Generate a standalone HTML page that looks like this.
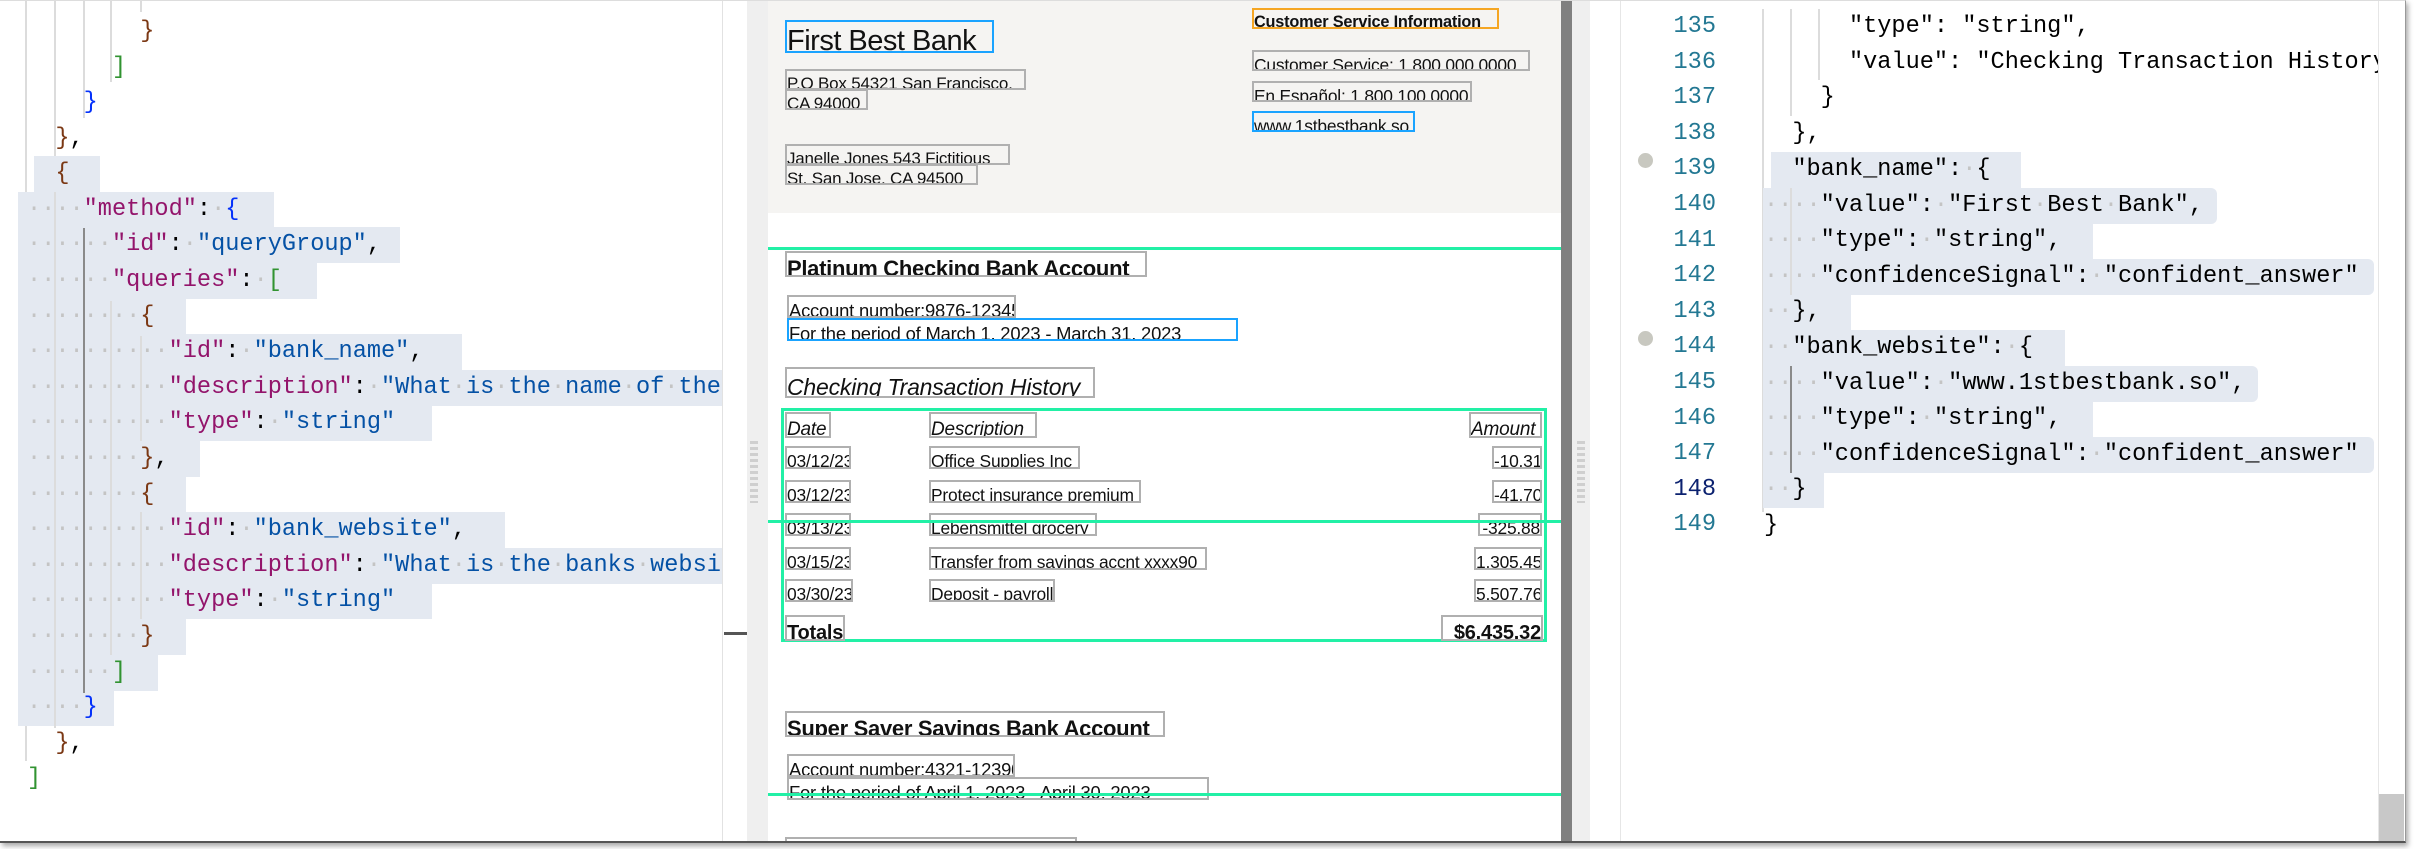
<!DOCTYPE html>
<html><head><meta charset="utf-8">
<style>
*{margin:0;padding:0;box-sizing:border-box}
body{width:2424px;height:849px;background:#fff;position:relative;overflow:hidden;font-family:"Liberation Sans",sans-serif}
.win{position:absolute;left:0;top:0;width:2406px;height:843px;border-right:1px solid #999;border-bottom:2px solid #555;border-top:1px solid #ddd;box-shadow:2px 3px 5px rgba(0,0,0,.35);overflow:hidden;background:#fff}
.code{position:absolute;font-family:"Liberation Mono",monospace;font-size:23.6px;white-space:pre;line-height:35.6px;height:35.6px}
.hl{position:absolute;background:#e4e9f1;height:35.6px}
.g{position:absolute;width:2px;background:#dcdcdc}
.k{color:#93146b}.s{color:#0451a5}.br{color:#7b3814}.bb{color:#0431fa}.bg{color:#319331}.d{color:#c4c4c4}
.t{position:absolute;white-space:nowrap;overflow:hidden;border:2px solid #b0b0b0;color:#111;font-size:17.4px;line-height:26px;letter-spacing:-0.2px}
.grn{position:absolute;background:#22f0a6}
.ln{position:absolute;left:1640px;width:76px;text-align:right;font-family:"Liberation Mono",monospace;font-size:23.6px;line-height:35.6px;color:#237893}
</style></head><body>
<div class="win">
<!-- LEFT PANEL -->
<div style="position:absolute;left:0;top:0;width:722px;height:843px;overflow:hidden">
<div class="g" style="left:25px;top:0;height:760px"></div>
<div class="g" style="left:54px;top:0;height:725px"></div>
<div class="g" style="left:83px;top:0;height:117px"></div>
<div class="g" style="left:110px;top:0;height:81px"></div>
<div class="g" style="left:140px;top:0;height:11px"></div>
<div class="hl" style="left:34px;top:155px;width:66px"></div>
<div class="hl" style="left:18px;top:191px;width:256px"></div>
<div class="hl" style="left:18px;top:226px;width:382px"></div>
<div class="hl" style="left:18px;top:262px;width:299px"></div>
<div class="hl" style="left:18px;top:298px;width:168px"></div>
<div class="hl" style="left:18px;top:333px;width:444px"></div>
<div class="hl" style="left:18px;top:369px;width:710px"></div>
<div class="hl" style="left:18px;top:404px;width:414px"></div>
<div class="hl" style="left:18px;top:440px;width:182px"></div>
<div class="hl" style="left:18px;top:476px;width:168px"></div>
<div class="hl" style="left:18px;top:511px;width:487px"></div>
<div class="hl" style="left:18px;top:547px;width:710px"></div>
<div class="hl" style="left:18px;top:582px;width:414px"></div>
<div class="hl" style="left:18px;top:618px;width:168px"></div>
<div class="hl" style="left:18px;top:654px;width:140px"></div>
<div class="hl" style="left:18px;top:689px;width:96px"></div>
<div class="g" style="left:54px;top:191px;height:536px"></div>
<div class="g" style="left:83px;top:227px;height:465px;background:#8a8a8a"></div>
<div class="g" style="left:110px;top:300px;height:354px"></div>
<div class="g" style="left:140px;top:335px;height:105px"></div>
<div class="g" style="left:140px;top:511px;height:107px"></div>
<div class="code" style="left:27px;top:13px">        <span class="br">}</span></div>
<div class="code" style="left:27px;top:49px">      <span class="bg">]</span></div>
<div class="code" style="left:27px;top:84px">    <span class="bb">}</span></div>
<div class="code" style="left:27px;top:120px">  <span class="br">}</span>,</div>
<div class="code" style="left:27px;top:155px">  <span class="br">{</span></div>
<div class="code" style="left:27px;top:191px"><span class="d">····</span><span class="k">"method"</span>:<span class="d">·</span><span class="bb">{</span></div>
<div class="code" style="left:27px;top:226px"><span class="d">······</span><span class="k">"id"</span>:<span class="d">·</span><span class="s">"queryGroup"</span>,</div>
<div class="code" style="left:27px;top:262px"><span class="d">······</span><span class="k">"queries"</span>:<span class="d">·</span><span class="bg">[</span></div>
<div class="code" style="left:27px;top:298px"><span class="d">········</span><span class="br">{</span></div>
<div class="code" style="left:27px;top:333px"><span class="d">··········</span><span class="k">"id"</span>:<span class="d">·</span><span class="s">"bank_name"</span>,</div>
<div class="code" style="left:27px;top:369px"><span class="d">··········</span><span class="k">"description"</span>:<span class="d">·</span><span class="s">"What<span class="d">·</span>is<span class="d">·</span>the<span class="d">·</span>name<span class="d">·</span>of<span class="d">·</span>the<span class="d">·</span>bank?"</span>,</div>
<div class="code" style="left:27px;top:404px"><span class="d">··········</span><span class="k">"type"</span>:<span class="d">·</span><span class="s">"string"</span></div>
<div class="code" style="left:27px;top:440px"><span class="d">········</span><span class="br">}</span>,</div>
<div class="code" style="left:27px;top:476px"><span class="d">········</span><span class="br">{</span></div>
<div class="code" style="left:27px;top:511px"><span class="d">··········</span><span class="k">"id"</span>:<span class="d">·</span><span class="s">"bank_website"</span>,</div>
<div class="code" style="left:27px;top:547px"><span class="d">··········</span><span class="k">"description"</span>:<span class="d">·</span><span class="s">"What<span class="d">·</span>is<span class="d">·</span>the<span class="d">·</span>banks<span class="d">·</span>website?"</span>,</div>
<div class="code" style="left:27px;top:582px"><span class="d">··········</span><span class="k">"type"</span>:<span class="d">·</span><span class="s">"string"</span></div>
<div class="code" style="left:27px;top:618px"><span class="d">········</span><span class="br">}</span></div>
<div class="code" style="left:27px;top:654px"><span class="d">······</span><span class="bg">]</span></div>
<div class="code" style="left:27px;top:689px"><span class="d">····</span><span class="bb">}</span></div>
<div class="code" style="left:27px;top:725px">  <span class="br">}</span>,</div>
<div class="code" style="left:27px;top:760px"><span class="bg">]</span></div>
</div>
<div style="position:absolute;left:722px;top:0;width:1px;height:843px;background:#e2e2e2"></div>
<div style="position:absolute;left:724px;top:631px;width:24px;height:3px;background:#555"></div>
<div style="position:absolute;left:747px;top:0;width:21px;height:843px;background:#efefef"></div>
<div style="position:absolute;left:750px;top:440px;width:8px;height:62px;background:repeating-linear-gradient(#cfcfcf 0 3px,transparent 3px 6px)"></div>

<!-- DOC -->
<div style="position:absolute;left:768px;top:0;width:793px;height:843px;background:#fff;overflow:hidden">
<div style="position:absolute;left:0;top:0;width:793px;height:212px;background:#f5f4f2"></div>
</div>
<div class="t" style="left:785px;top:19px;width:209px;height:33px;border-color:#1aa3ff;font-size:29px;line-height:38px;letter-spacing:-0.5px">First Best Bank</div>
<div class="t" style="left:785px;top:68px;width:241px;height:21px;font-size:17px;line-height:26px">P.O Box 54321 San Francisco,</div>
<div class="t" style="left:785px;top:88px;width:83px;height:21px;font-size:17px;line-height:26px">CA 94000</div>
<div class="t" style="left:785px;top:143px;width:225px;height:21px;font-size:17px;line-height:26px">Janelle Jones 543 Fictitious</div>
<div class="t" style="left:785px;top:163px;width:193px;height:21px;font-size:17px;line-height:26px">St. San Jose, CA 94500</div>
<div class="t" style="left:1252px;top:7px;width:247px;height:21px;border-color:#f5a623;font-size:16.3px;font-weight:bold;line-height:25px">Customer Service Information</div>
<div class="t" style="left:1252px;top:49px;width:278px;height:21px;font-size:17.4px;line-height:26px">Customer Service: 1.800.000.0000</div>
<div class="t" style="left:1252px;top:80px;width:220px;height:21px;font-size:17.4px;line-height:26px">En Español: 1.800.100.0000</div>
<div class="t" style="left:1252px;top:110px;width:163px;height:21px;border-color:#1aa3ff;font-size:17.4px;line-height:26px">www.1stbestbank.so</div>
<div class="grn" style="left:768px;top:246px;width:793px;height:3px"></div>
<div class="t" style="left:785px;top:250px;width:362px;height:26px;font-size:22px;font-weight:bold;line-height:31px;letter-spacing:-0.3px">Platinum Checking Bank Account</div>
<div class="t" style="left:787px;top:294px;width:229px;height:23px;font-size:18.4px;line-height:28px">Account number:9876-12345</div>
<div class="t" style="left:787px;top:317px;width:451px;height:23px;border-color:#1aa3ff;font-size:18.4px;line-height:28px">For the period of March 1, 2023 - March 31, 2023</div>
<div class="t" style="left:785px;top:366px;width:310px;height:31px;font-size:23px;font-style:italic;line-height:37px">Checking Transaction History</div>
<div style="position:absolute;left:781px;top:407px;width:766px;height:234px;border:3px solid #22f0a6"></div>
<div class="t" style="left:785px;top:411px;width:46px;height:26px;font-size:19px;font-style:italic;line-height:31px">Date</div>
<div class="t" style="left:929px;top:411px;width:108px;height:26px;font-size:19px;font-style:italic;line-height:31px">Description</div>
<div class="t" style="left:1469px;top:411px;width:73px;height:26px;font-size:19px;font-style:italic;line-height:31px">Amount</div>
<div class="t" style="left:785px;top:445px;width:66px;height:23px">03/12/23</div>
<div class="t" style="left:929px;top:445px;width:151px;height:23px">Office Supplies Inc</div>
<div class="t" style="left:1492px;top:445px;width:50px;height:23px;text-align:right">-10.31</div>
<div class="t" style="left:785px;top:479px;width:66px;height:23px">03/12/23</div>
<div class="t" style="left:929px;top:479px;width:212px;height:23px">Protect insurance premium</div>
<div class="t" style="left:1492px;top:479px;width:50px;height:23px;text-align:right">-41.70</div>
<div class="t" style="left:785px;top:512px;width:66px;height:23px">03/13/23</div>
<div class="t" style="left:929px;top:512px;width:168px;height:23px">Lebensmittel grocery</div>
<div class="t" style="left:1478px;top:512px;width:64px;height:23px;text-align:right">-325.88</div>
<div class="t" style="left:785px;top:546px;width:66px;height:23px">03/15/23</div>
<div class="t" style="left:929px;top:546px;width:278px;height:23px">Transfer from savings accnt xxxx90</div>
<div class="t" style="left:1474px;top:546px;width:68px;height:23px;text-align:right">1,305.45</div>
<div class="t" style="left:785px;top:578px;width:68px;height:23px">03/30/23</div>
<div class="t" style="left:929px;top:578px;width:126px;height:23px">Deposit - payroll</div>
<div class="t" style="left:1474px;top:578px;width:68px;height:23px;text-align:right">5,507.76</div>
<div class="t" style="left:785px;top:614px;width:60px;height:26px;font-size:20px;font-weight:bold;line-height:32px">Totals</div>
<div class="t" style="left:1441px;top:614px;width:102px;height:26px;font-size:20px;font-weight:bold;line-height:32px;text-align:right">$6,435.32</div>
<div class="grn" style="left:768px;top:519px;width:793px;height:3px"></div>
<div class="t" style="left:785px;top:710px;width:380px;height:26px;font-size:22px;font-weight:bold;line-height:31px;letter-spacing:-0.3px">Super Saver Savings Bank Account</div>
<div class="t" style="left:787px;top:753px;width:228px;height:23px;font-size:18.4px;line-height:28px">Account number:4321-12390</div>
<div class="t" style="left:787px;top:776px;width:422px;height:23px;font-size:18.4px;line-height:28px">For the period of April 1, 2023 - April 30, 2023</div>
<div class="grn" style="left:768px;top:792px;width:793px;height:3px"></div>
<div class="t" style="left:785px;top:836px;width:292px;height:23px"></div>
<div style="position:absolute;left:1561px;top:0;width:11px;height:843px;background:#808080"></div>
<div style="position:absolute;left:1572px;top:0;width:18px;height:843px;background:#efefef"></div>
<div style="position:absolute;left:1577px;top:440px;width:8px;height:62px;background:repeating-linear-gradient(#cfcfcf 0 3px,transparent 3px 6px)"></div>

<!-- RIGHT PANEL -->
<div style="position:absolute;left:1620px;top:0;width:1px;height:843px;background:#e6e6e6"></div>
<div style="position:absolute;left:1590px;top:0;width:788px;height:843px;overflow:hidden">
<div class="g" style="left:172px;top:8px;height:503px"></div>
<div class="g" style="left:200px;top:8px;height:107px"></div>
<div class="g" style="left:228px;top:8px;height:71px"></div>
<div class="hl" style="left:181px;top:151px;width:250px"></div>
<div class="hl" style="left:173px;top:187px;width:454px;border-radius:0 6px 6px 0"></div>
<div class="hl" style="left:173px;top:222px;width:330px"></div>
<div class="hl" style="left:173px;top:258px;width:611px;border-radius:0 6px 6px 0"></div>
<div class="hl" style="left:173px;top:293px;width:88px"></div>
<div class="hl" style="left:173px;top:329px;width:302px"></div>
<div class="hl" style="left:173px;top:365px;width:495px;border-radius:0 6px 6px 0"></div>
<div class="hl" style="left:173px;top:400px;width:330px"></div>
<div class="hl" style="left:173px;top:436px;width:611px;border-radius:0 6px 6px 0"></div>
<div class="hl" style="left:173px;top:471px;width:61px"></div>
<div class="g" style="left:200px;top:187px;height:107px"></div>
<div class="g" style="left:200px;top:365px;height:107px;background:#8a8a8a"></div>
<div class="code" style="left:174px;top:8px">      "type": "string",</div>
<div class="code" style="left:174px;top:44px">      "value": "Checking Transaction History"</div>
<div class="code" style="left:174px;top:79px">    }</div>
<div class="code" style="left:174px;top:115px">  },</div>
<div class="code" style="left:174px;top:151px">  "bank_name":<span class="d">·</span>{</div>
<div class="code" style="left:174px;top:187px"><span class="d">····</span>"value":<span class="d">·</span>"First<span class="d">·</span>Best<span class="d">·</span>Bank",</div>
<div class="code" style="left:174px;top:222px"><span class="d">····</span>"type":<span class="d">·</span>"string",</div>
<div class="code" style="left:174px;top:258px"><span class="d">····</span>"confidenceSignal":<span class="d">·</span>"confident_answer"</div>
<div class="code" style="left:174px;top:293px"><span class="d">··</span>},</div>
<div class="code" style="left:174px;top:329px"><span class="d">··</span>"bank_website":<span class="d">·</span>{</div>
<div class="code" style="left:174px;top:365px"><span class="d">····</span>"value":<span class="d">·</span>"www.1stbestbank.so",</div>
<div class="code" style="left:174px;top:400px"><span class="d">····</span>"type":<span class="d">·</span>"string",</div>
<div class="code" style="left:174px;top:436px"><span class="d">····</span>"confidenceSignal":<span class="d">·</span>"confident_answer"</div>
<div class="code" style="left:174px;top:471px"><span class="d">··</span>}</div>
<div class="code" style="left:174px;top:507px">}</div>
</div>
<div class="ln" style="top:8px">135<br>136<br>137<br>138<br>139<br>140<br>141<br>142<br>143<br>144<br>145<br>146<br>147<br><span style="color:#0b216f">148</span><br>149</div>
<div style="position:absolute;left:1638px;top:152px;width:15px;height:15px;border-radius:50%;background:#c8c8c0"></div>
<div style="position:absolute;left:1638px;top:330px;width:15px;height:15px;border-radius:50%;background:#c8c8c0"></div>
<div style="position:absolute;left:2378px;top:0;width:1px;height:843px;background:#e6e6e6"></div>
<div style="position:absolute;left:2379px;top:793px;width:25px;height:50px;background:#c8c8c8"></div>
</div>
</body></html>
